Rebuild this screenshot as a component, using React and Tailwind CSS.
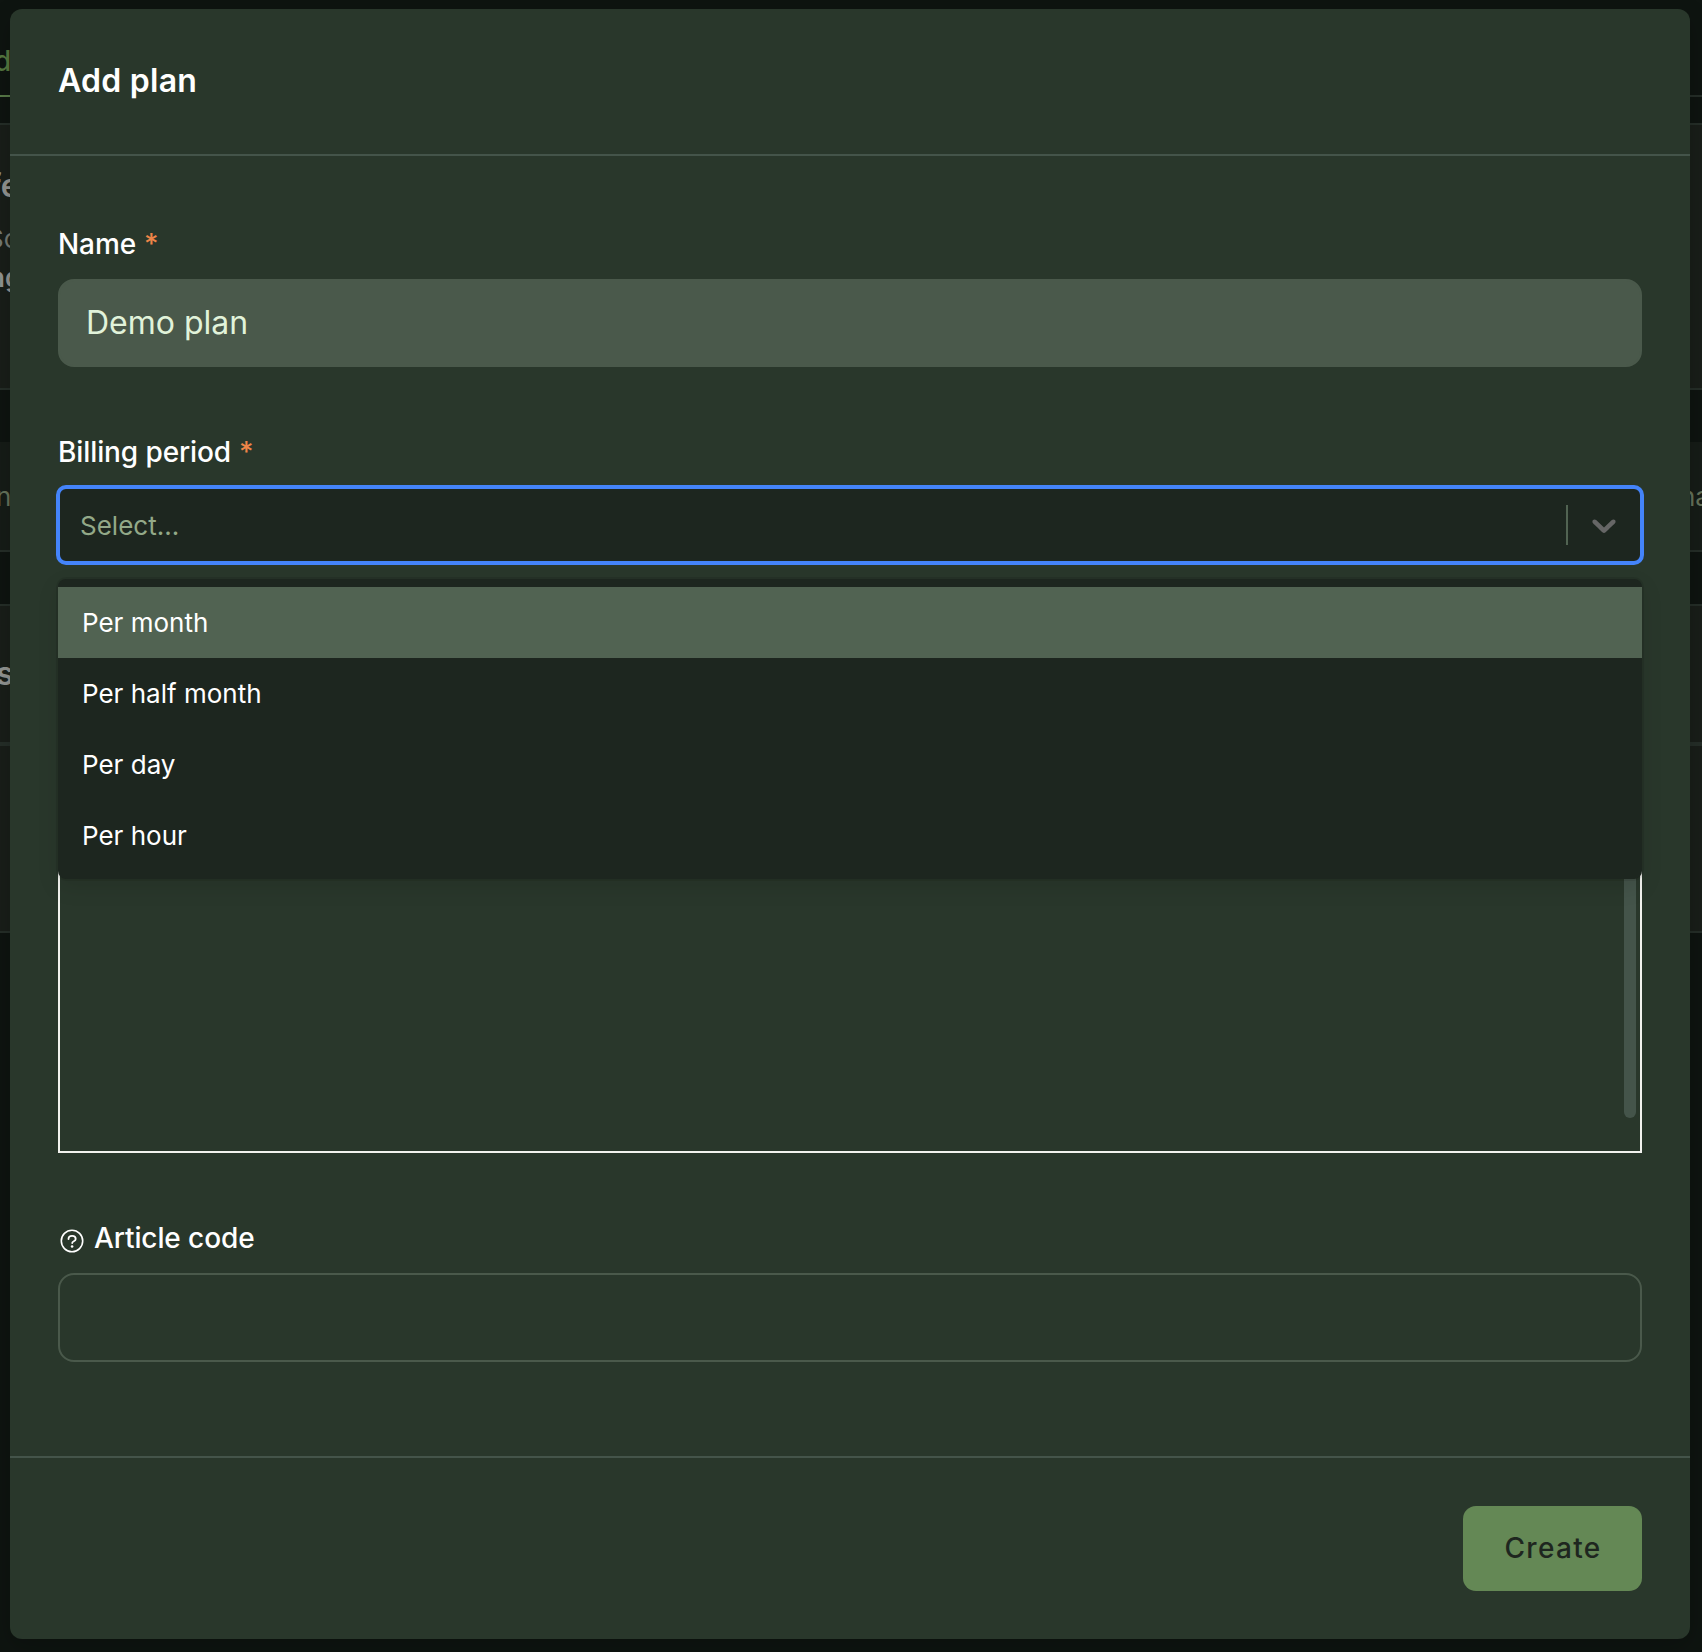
import React from "react";

function Backdrop() {
  return (
    <div className="flex h-[1652px] w-full flex-col bg-[#0e1410] whitespace-nowrap">
      <div className="flex h-[97px] justify-between border-b-2 border-[#252e28]">
        <div className="h-[97px] w-[40px] border-b-2 border-[#587a48] pt-[41px] text-[28px] leading-[40px] font-medium text-[#55783f]">
          <span className="-ml-[6px]">d</span>
        </div>
      </div>
      <div className="mt-[26px] h-[267px] border-y-2 border-[#252e28] bg-[#191e19]">
        <div className="-ml-[11px] pt-[41px] text-[32px] leading-[40px] font-semibold text-[#929492]">fe</div>
        <div className="-ml-[13px] pt-[13px] text-[26px] leading-[39px] text-[#747a74]">So</div>
        <div className="-ml-[11px] text-[26px] leading-[39px] font-semibold text-[#929492]">ng</div>
      </div>
      <div className="mt-[52px] flex h-[110px] items-center justify-between border-b-2 border-[#252e28] bg-[#161c17] text-[26px] text-[#66735b]">
        <span className="-ml-[4px]">n</span>
        <span className="w-[17px] overflow-hidden">
          <span className="-ml-[5px]">na</span>
        </span>
      </div>
      <div className="mt-[52px] h-[142px] border-t-2 border-b-4 border-[#252e28] bg-[#191e19] pt-[48px] text-[32px] leading-[40px] font-semibold text-[#929492]">
        <span className="-ml-[4px]">s</span>
      </div>
      <div className="h-[187px] border-b-2 border-[#252e28] bg-[#191e19]" />
    </div>
  );
}

function Label({ children, required }) {
  return (
    <div className="flex h-[40px] items-center gap-[8px] text-[28px] font-medium tracking-[-0.1px] text-white">
      {children}
      {required && <span className="text-[#ed8548]">*</span>}
    </div>
  );
}

function HelpIcon() {
  return (
    <svg viewBox="0 0 24 24" className="mt-[6px] ml-[2px] size-6" fill="none" stroke="currentColor" strokeWidth="1.6" strokeLinecap="round">
      <circle cx="12" cy="12" r="10.7" />
      <path d="M8.5 10.1c0-2 1.5-3.2 3.6-3.2s3.6 1.2 3.6 3c0 2.4-3.5 2.2-3.5 4.2" strokeWidth="1.8" />
      <circle cx="12.1" cy="17.5" r="1.3" fill="currentColor" stroke="none" />
    </svg>
  );
}

const options = ["Per month", "Per half month", "Per day", "Per hour"];

function Menu() {
  return (
    <div className="absolute top-[94px] left-0 z-10 w-full rounded-[8px] bg-[#1d261f] py-2 shadow-[0_0_0_2px_rgba(0,0,0,0.08),0_8px_22px_rgba(0,0,0,0.1)]">
      {options.map((o, i) => (
        <div
          key={o}
          className={
            "flex h-[71px] items-center px-6 text-[26px] text-white " + (i === 0 ? "bg-[#516352]" : "")
          }
        >
          {o}
        </div>
      ))}
    </div>
  );
}

function Select() {
  return (
    <div className="relative h-[80px]">
      <div className="-mx-[2px] flex h-[80px] items-center rounded-[10px] border-4 border-[#4484fa] bg-[#1d261f]">
        <span className="flex-1 pl-[20px] text-[26px] text-[#93a988]">Select...</span>
        <span className="h-[40px] w-[2px] bg-[#516352]" />
        <svg viewBox="0 0 20 20" className="mx-[16px] size-[40px]" fill="#666">
          <path d="M4.516 7.548c0.436-0.446 1.043-0.481 1.576 0l3.908 3.747 3.908-3.747c0.533-0.481 1.141-0.446 1.574 0 0.436 0.445 0.408 1.197 0 1.615-0.406 0.418-4.695 4.502-4.695 4.502-0.217 0.223-0.502 0.335-0.787 0.335s-0.57-0.112-0.789-0.335c0 0-4.287-4.084-4.695-4.502s-0.436-1.17 0-1.615z" />
        </svg>
      </div>
      <Menu />
    </div>
  );
}

export default function App() {
  return (
    <div className="relative h-[1652px] w-full overflow-hidden font-[Inter,sans-serif]">
      <Backdrop />
      <div className="absolute top-[9px] left-[10px] flex h-[1630px] w-[1680px] flex-col rounded-[12px] bg-[#29372b] shadow-[0_8px_24px_rgba(0,0,0,0.2)]">
        <div className="flex h-[147px] items-center border-b-2 border-[#44544a] px-12 pb-[2px] text-[32px] font-semibold tracking-[0.25px] text-white">
          Add plan
        </div>
        <div className="flex h-[1302px] flex-col border-b-2 border-[#44544a] px-12 pt-[68px]">
          <Label required>Name</Label>
          <div className="mt-[15px] flex h-[88px] shrink-0 items-center rounded-[16px] border-2 border-[#4a594b] bg-[#4a594b] px-[26px] text-[32px] text-[#e1f3da]">
            Demo plan
          </div>
          <div className="mt-[65px]">
            <Label required>Billing period</Label>
          </div>
          <div className="mt-[13px]">
            <Select />
          </div>
          <div className="mt-[135px] flex h-[453px] shrink-0 justify-end border-2 border-[#f2f2ee] pr-[4px]">
            <div className="h-[416px] w-[12px] rounded-full bg-[#44544a]" />
          </div>
          <div className="mt-[65px]">
            <Label>
              <HelpIcon />
              <span className="ml-[2px]">Article code</span>
            </Label>
          </div>
          <div className="mt-[15px] h-[89px] shrink-0 rounded-[16px] border-2 border-[#4a594b]" />
        </div>
        <div className="flex justify-end px-12 pt-[48px]">
          <button className="h-[85px] w-[179px] rounded-[13px] bg-[#648855] pb-[2px] pl-[1px] text-[28px] font-medium tracking-[1.3px] text-[#1e261f]">
            Create
          </button>
        </div>
      </div>
    </div>
  );
}
